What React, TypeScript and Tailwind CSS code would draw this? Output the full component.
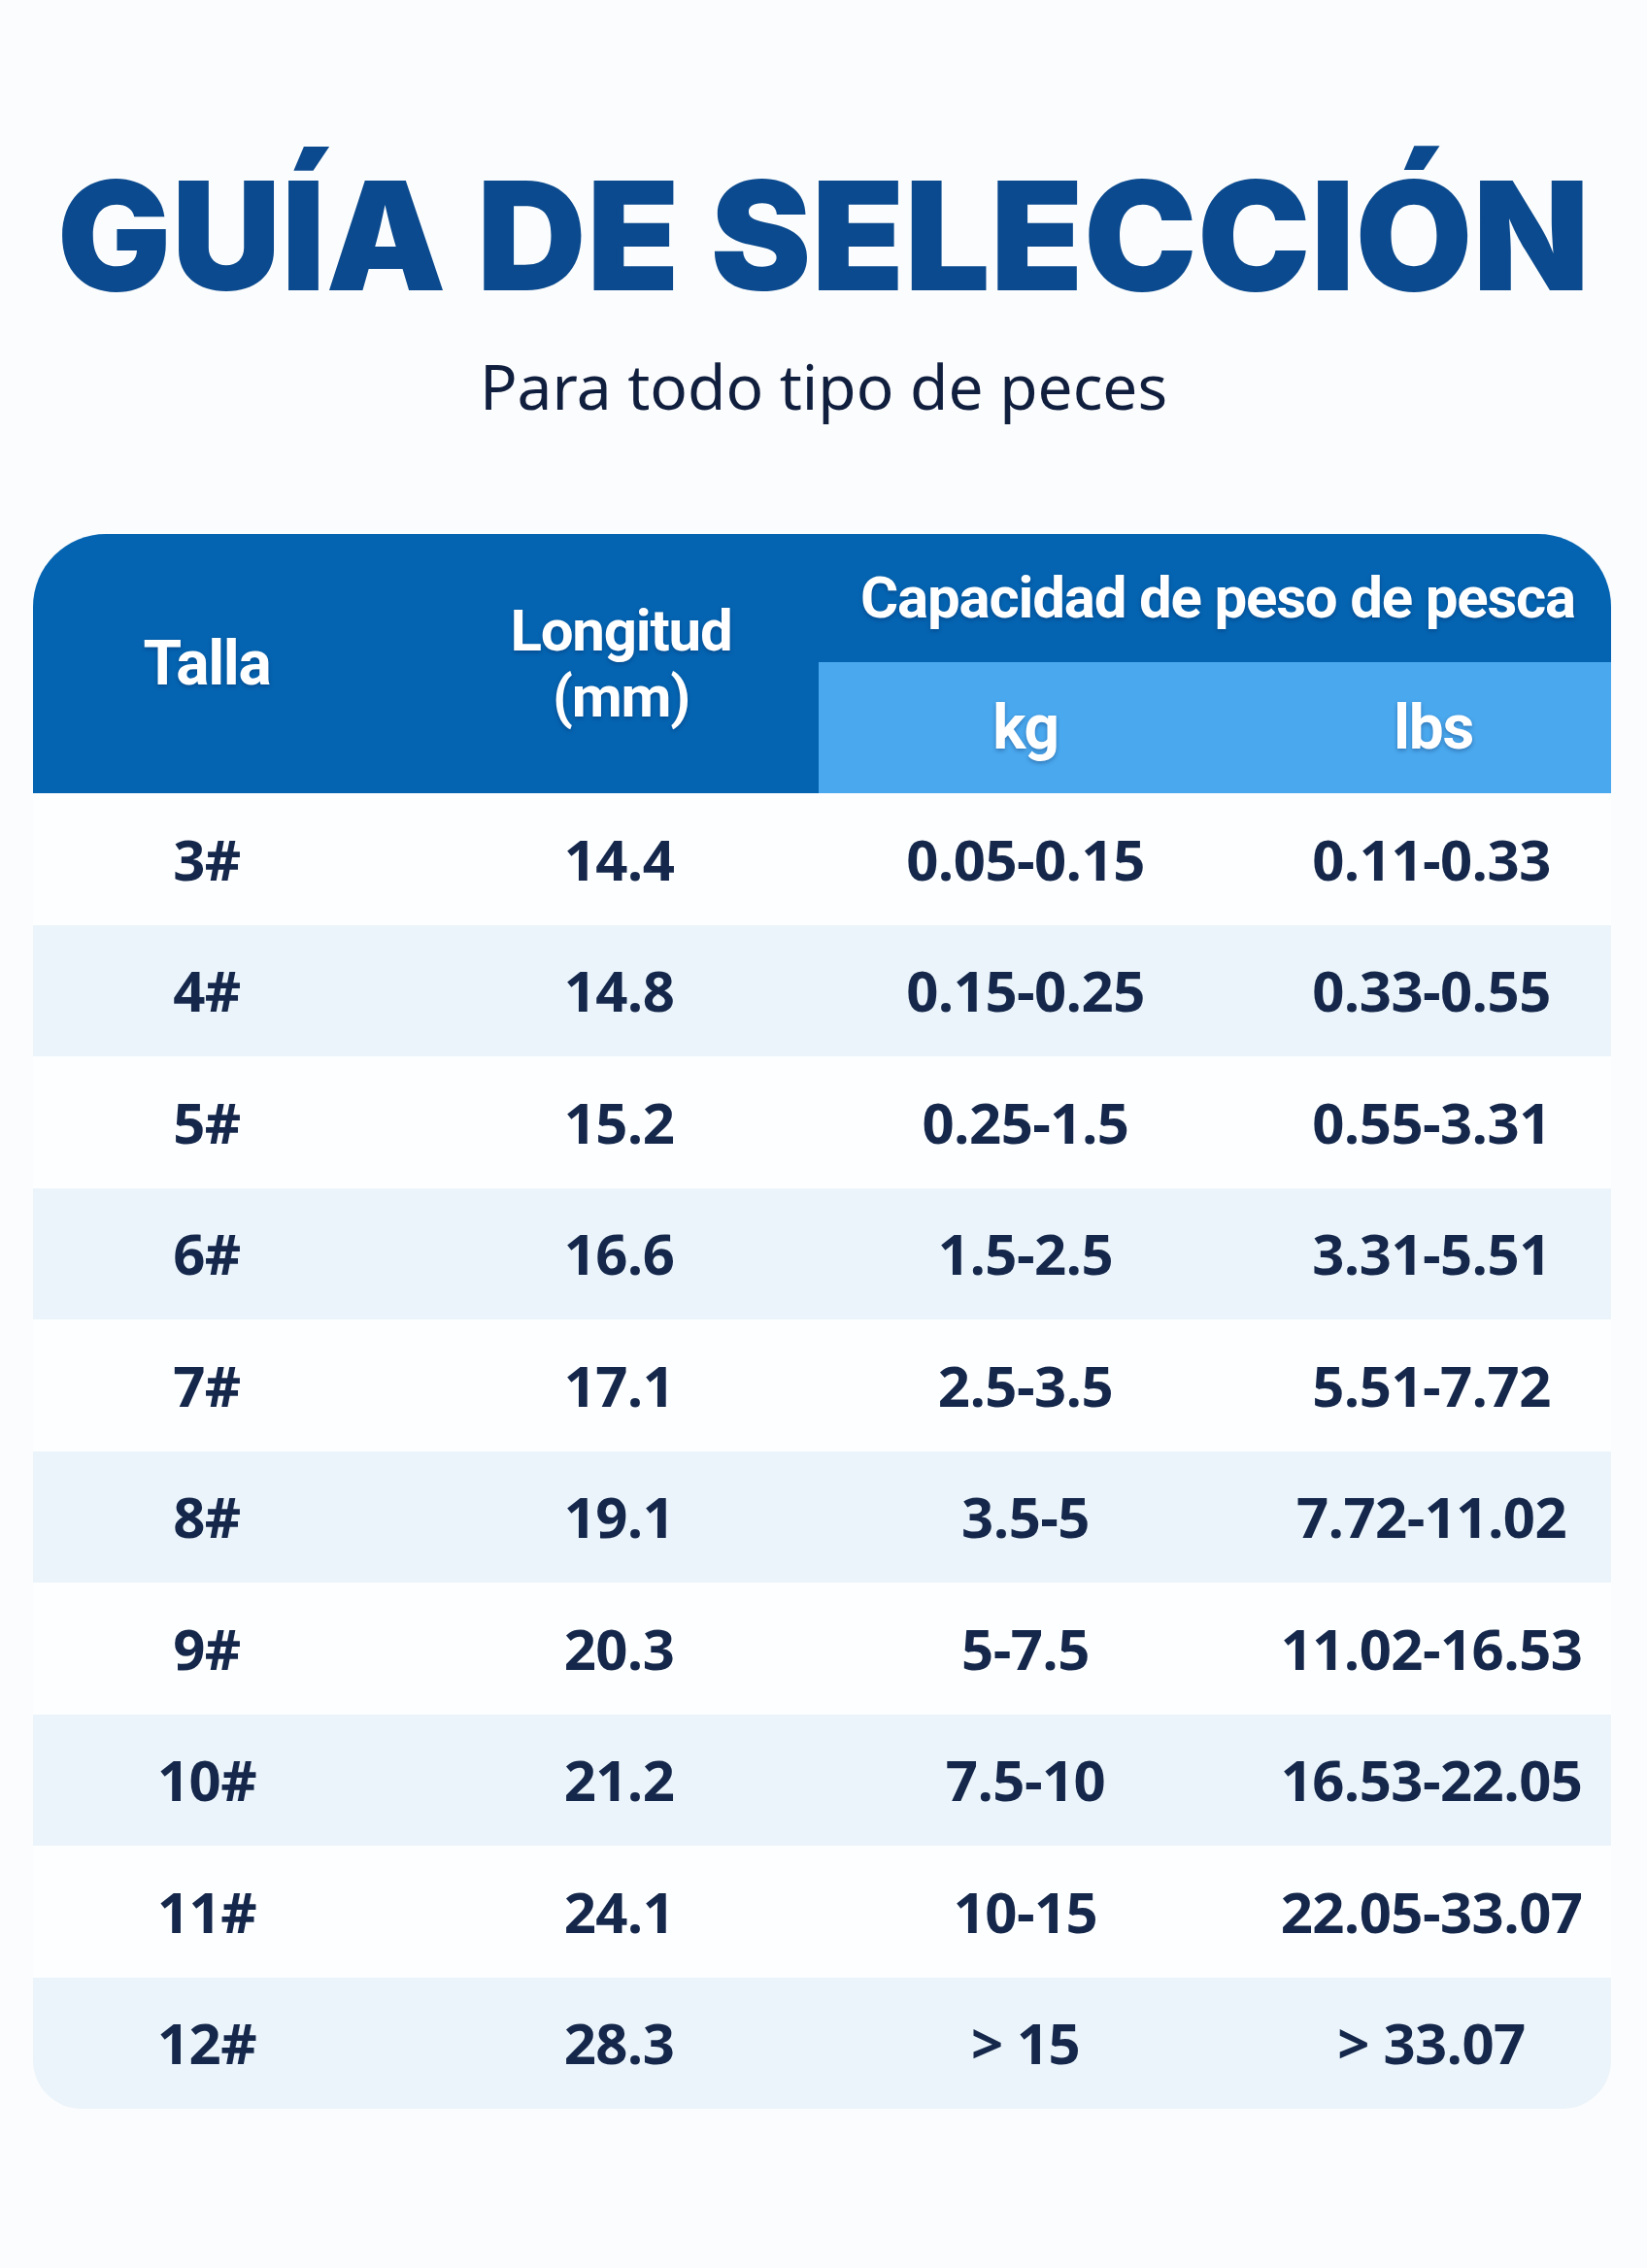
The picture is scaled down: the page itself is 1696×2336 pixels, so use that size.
const ROWS: [string, string, string, string][] = [
  ["3#", "14.4", "0.05-0.15", "0.11-0.33"],
  ["4#", "14.8", "0.15-0.25", "0.33-0.55"],
  ["5#", "15.2", "0.25-1.5", "0.55-3.31"],
  ["6#", "16.6", "1.5-2.5", "3.31-5.51"],
  ["7#", "17.1", "2.5-3.5", "5.51-7.72"],
  ["8#", "19.1", "3.5-5", "7.72-11.02"],
  ["9#", "20.3", "5-7.5", "11.02-16.53"],
  ["10#", "21.2", "7.5-10", "16.53-22.05"],
  ["11#", "24.1", "10-15", "22.05-33.07"],
  ["12#", "28.3", "> 15", "> 33.07"],
];

const headFont = "font-['Roboto','Liberation_Sans',sans-serif] font-bold text-white tracking-[-0.02em] [text-shadow:0_2px_4px_rgba(0,30,80,0.35)]";
const cellFont = "font-['Open_Sans','Noto_Sans',sans-serif] font-bold text-[58px] leading-none tracking-[-0.01em] text-[#15284b]";

export default function App() {
  return (
    <div className="flex h-[2336px] w-[1696px] flex-col items-center bg-[#fbfcfd]">
      <h1 className="mt-[165px] whitespace-nowrap font-['Inter',sans-serif] text-[156px] font-black leading-none tracking-[0.002em] text-[#0b4a8e]">
        GUÍA DE SELECCIÓN
      </h1>
      <p className="mt-[45px] font-['Noto_Sans','Open_Sans',sans-serif] text-[64px] leading-none text-[#111f3f]">
        Para todo tipo de peces
      </p>

      <div className="mt-[120px] w-[1625px] self-start ml-[34px]">
        {/* header */}
        <div className="grid h-[267px] grid-cols-[358px_451px_816px] overflow-hidden rounded-t-[75px] bg-[#0564b1]">
          <div className={`flex items-center justify-center text-[64px] leading-none ${headFont}`}>
            Talla
          </div>
          <div className="flex items-center justify-center pl-[44px]">
            <p className={`text-center text-[60px] leading-[68px] ${headFont}`}>
              Longitud
              <br />
              (mm)
            </p>
          </div>
          <div className="flex flex-col">
            <div className={`flex h-[132px] items-center justify-center pl-[6px] text-[60px] leading-none ${headFont}`}>
              Capacidad de peso de pesca
            </div>
            <div className="grid h-[135px] grid-cols-[426px_390px] bg-[#4aa8ee]">
              <div className={`flex items-center justify-center text-[64px] leading-none ${headFont}`}>kg</div>
              <div className={`flex items-center justify-center pl-[24px] text-[64px] leading-none ${headFont}`}>lbs</div>
            </div>
          </div>
        </div>

        {/* rows */}
        {ROWS.map((row, i) => (
          <div
            key={row[0]}
            className={`grid h-[135.5px] grid-cols-[358px_451px_426px_390px] items-center ${
              i % 2 === 1 ? "bg-[#ebf4fa]" : "bg-[#fdfeff]"
            } ${i === ROWS.length - 1 ? "rounded-b-[50px]" : ""}`}
          >
            <div className={`text-center ${cellFont}`}>{row[0]}</div>
            <div className={`pl-[40px] text-center ${cellFont}`}>{row[1]}</div>
            <div className={`text-center ${cellFont}`}>{row[2]}</div>
            <div className={`pl-[20px] text-center ${cellFont}`}>{row[3]}</div>
          </div>
        ))}
      </div>
    </div>
  );
}
